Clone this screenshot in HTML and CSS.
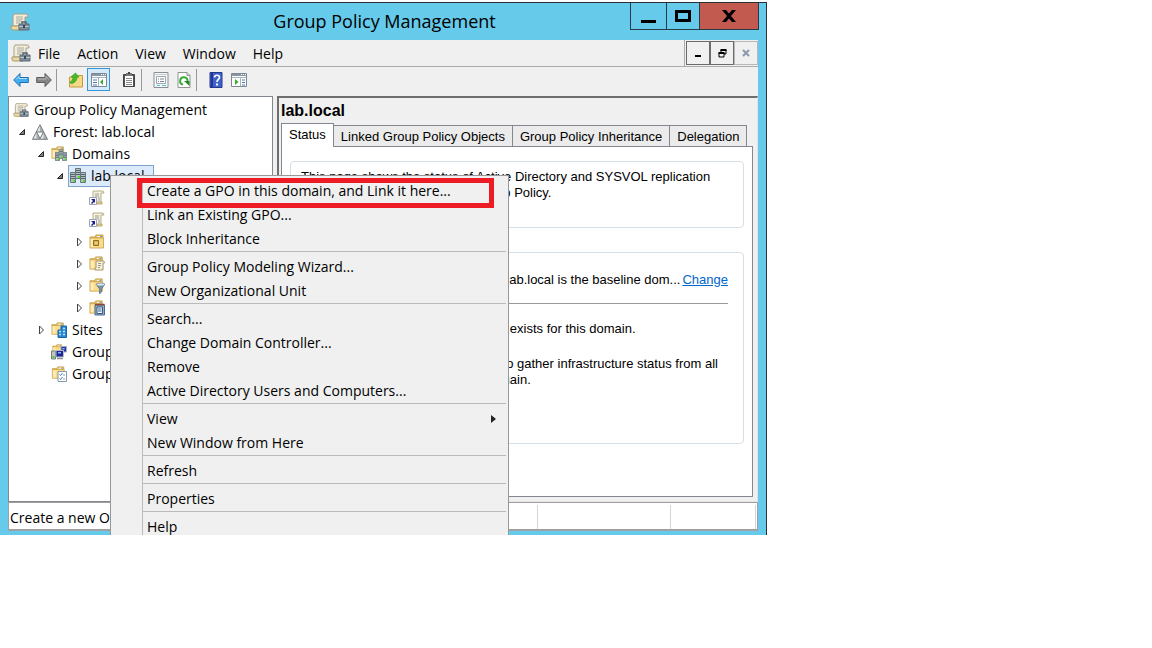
FILE: index.html
```html
<!DOCTYPE html>
<html lang="en">
<head>
<meta charset="utf-8">
<title>Group Policy Management</title>
<link rel="stylesheet" href="styles.css">
</head>
<body>
<svg class="sprite" aria-hidden="true">
  <symbol id="i-gpm" viewBox="0 0 20 20">
    <path d="M4 2h12a2 2 0 0 1 2 2v1h-3v9H3V4z" fill="#f3eddb" stroke="#a89f86"/>
    <path d="M6 5h7M6 7h7M6 9h6M6 11h4" stroke="#aaa9a0"/>
    <path d="M1 14h11v4H3a2 2 0 0 1-2-2z" fill="#ead9a6" stroke="#aa9a6c"/>
    <path d="M12 12v-2h4v2" fill="none" stroke="#555f69" stroke-width="1.4"/>
    <path d="M9 12h10v6H9z" fill="#7d8d9b" stroke="#5c6a76"/>
    <path d="M9 14.500h10" stroke="#b9c5ce"/><path d="M13 13h2v3h-2z" fill="#3d4750"/>
  </symbol>
  <symbol id="i-forest" viewBox="0 0 16 16">
    <path d="M8 .7 15.500 15.300H.5z" fill="#a9afb1" stroke="#777d80"/>
    <path d="M8 2v5.500H5zM4.500 9v5.500H1.600zM11.500 9v5.500H8.500z" fill="#e4e8e9"/>
    <path d="M4.500 8h7L8 14.500z" fill="#fff" stroke="#777d80"/>
  </symbol>
  <symbol id="i-folder" viewBox="0 0 16 16">
    <path d="M1 3h5l1-2h7v3H1z" fill="#e9c56a" stroke="#c99e49"/>
    <path d="M8.500 2.500h4" stroke="#fff"/><path d="M11 2.500h2" stroke="#4c9ad4"/>
    <path d="M1 4h13.500v10H1z" fill="#f9dc8c" stroke="#d3ac58"/>
    <path d="M2 5h3v8H2z" fill="#fdecb5"/>
  </symbol>
  <symbol id="i-server" viewBox="0 0 6 11">
    <path d="M.5.5h5v10h-5z" fill="#b4c0c3" stroke="#66777b"/>
    <path d="M1 2.500h4M1 4.500h4M1 6.500h4" stroke="#52656a"/>
    <path d="M3 8h2v2H3z" fill="#4fe01e"/>
  </symbol>
  <symbol id="i-domains" viewBox="0 0 16 16">
    <use href="#i-folder" width="14" height="14"/>
    <use href="#i-server" x="4" y="6" width="5" height="9"/>
    <use href="#i-server" x="11" y="6" width="5" height="9"/>
    <use href="#i-server" x="7.500" y="3" width="5" height="10"/>
  </symbol>
  <symbol id="i-domain" viewBox="0 0 16 16">
    <use href="#i-server" x="5" y="0" width="6" height="11"/>
    <use href="#i-server" x="0" y="4" width="6" height="11"/>
    <use href="#i-server" x="10" y="4" width="6" height="11"/>
  </symbol>
  <symbol id="i-link" viewBox="0 0 16 16">
    <path d="M4 1h9a2 2 0 0 1 2 2h-3v10H4z" fill="#f6f1df" stroke="#b9ac84"/>
    <path d="M6 4h4M6 6h4M9 8h2M9 10h2" stroke="#999"/>
    <path d="M8 12h5v2H8z" fill="#e5d498" stroke="#b9a870"/>
    <path d="M.5 7.500h7v7h-7z" fill="#fff" stroke="#9aa2b4"/>
    <path d="M2 9h4v4L5 12l-2 2-1-1 2-2z" fill="#1c1c9c"/>
  </symbol>
  <symbol id="i-ou" viewBox="0 0 16 16">
    <use href="#i-folder" width="16" height="16"/>
    <path d="M4.500 6.500h5v5h-5z" fill="#d8b34d" stroke="#8e7220"/><path d="M6 8h3v2H6z" fill="#e9d17a"/>
  </symbol>
  <symbol id="i-gpos" viewBox="0 0 16 16">
    <use href="#i-folder" width="15" height="15"/>
    <path d="M7 5h7a1.500 1.500 0 0 1 1.500 2H14v7H6v-2h1z" fill="#f7f0da" stroke="#a69669"/>
    <path d="M9 7.500h3M9 9.500h3M9 11.500h2" stroke="#9a9a9a"/>
  </symbol>
  <symbol id="i-wmi" viewBox="0 0 16 16">
    <use href="#i-folder" width="15" height="15"/>
    <path d="M7 6h9l-3.500 5v3L10.500 16v-5z" fill="#7892aa" stroke="#526b83" stroke-width=".7"/>
    <ellipse cx="11.500" cy="6.500" rx="4" ry="1.500" fill="#e1eaf1" stroke="#657c92" stroke-width=".6"/>
  </symbol>
  <symbol id="i-starter" viewBox="0 0 16 16">
    <use href="#i-folder" width="15" height="15"/>
    <path d="M6 5h9.500v10H6z" fill="#92b0cf" stroke="#4d6887"/>
    <path d="M6 4.500h9.500" stroke="#90452f" stroke-width="1.500"/>
    <path d="M8 7h5.500v6.500H8z" fill="#fff" stroke="#315985"/><path d="M9 9h3.500M9 11h3.500" stroke="#315985"/>
  </symbol>
  <symbol id="i-sites" viewBox="0 0 16 16">
    <use href="#i-folder" width="14" height="14"/>
    <path d="M10 4h5.500v11.500H7V8h3z" fill="#2887d0" stroke="#1a65a8"/>
    <path d="M8 9.500h2M8 12.500h2M12 6.500h2M12 9.500h2M12 12.500h2" stroke="#b9e6ff" stroke-width="1.500"/>
  </symbol>
  <symbol id="i-model" viewBox="0 0 16 16">
    <use href="#i-folder" x="1" width="11" height="11"/>
    <path d="M.5 7h4v8h-4z" fill="#c0c5c7" stroke="#777e83"/><path d="M1.500 12h2v2h-2z" fill="#4bd127"/>
    <path d="M10 2.500h5.500V8H10z" fill="#2834aa" stroke="#a8afb8"/>
    <path d="M5 6.500h7.500V13H5z" fill="#1b2795" stroke="#b6bcc4"/>
    <path d="M7 8h3v1.500H7zM11.500 4h2v1.500h-2z" fill="#8bb5ff"/><path d="M6 14.500h6" stroke="#8c939a" stroke-width="1.500"/>
  </symbol>
  <symbol id="i-results" viewBox="0 0 16 16">
    <use href="#i-folder" width="15" height="14"/>
    <path d="M7 5.500h8.500v10H7z" fill="#fff" stroke="#8798a6"/>
    <path d="m8.500 8.500 1 1L11.500 7M8.500 12.500l1 1 2-2.500" fill="none" stroke="#2980cc"/><path d="M12 9h2M12 13h2" stroke="#999"/>
  </symbol>
  <symbol id="i-back" viewBox="0 0 16 16">
    <path d="M.7 8 7 1.500v4h8.300v5H7v4z" fill="#42adf0" stroke="#206fb2"/><path d="M3 7.500 6 4.500v2h8" fill="none" stroke="#a7defd"/>
  </symbol>
  <symbol id="i-fwd" viewBox="0 0 16 16">
    <path d="M15.300 8 9 1.500v4H.7v5H9v4z" fill="#858585" stroke="#5c5c5c"/><path d="M2 7h8V4.500l3 3" fill="none" stroke="#b9b9b9"/>
  </symbol>
  <symbol id="i-up" viewBox="0 0 16 16">
    <path d="M1.500 5h8l1-1.500h4V15h-13z" fill="#f6d987" stroke="#c79a3e"/>
    <path d="M2 10c2-1 3-2.500 3-5H3l4.500-4L11 5H9c0 4-3 6.500-6 6.500z" fill="#48bd28" stroke="#2c8d18" stroke-width=".6"/>
  </symbol>
  <symbol id="i-pane" viewBox="0 0 16 16">
    <path d="M.5 1.500h15v13H.5z" fill="#fff" stroke="#7d8791"/><path d="M1 3h14" stroke="#8797a5" stroke-width="2"/>
    <path d="M10 2.500h1M12 2.500h1M14 2.500h1" stroke="#fff"/><path d="M1 5.500h14M7.500 6v8" stroke="#aab4bc"/>
    <path d="M2 8h4M2 10.500h4M2 13h4" stroke="#477bb2"/><path d="M12 7v6L9 10z" fill="#39ad2d"/>
  </symbol>
  <symbol id="i-action" viewBox="0 0 16 16">
    <path d="M.5 1.500h15v13H.5z" fill="#fff" stroke="#7d8791"/><path d="M1 3h14" stroke="#8797a5" stroke-width="2"/>
    <path d="M10 2.500h1M12 2.500h1M14 2.500h1" stroke="#fff"/><path d="M1 5.500h14M9.500 6v8" stroke="#aab4bc"/>
    <path d="M11 8h3M11 10.500h3M11 13h3" stroke="#477bb2"/><path d="M4 7v6l3.500-3z" fill="#39ad2d"/>
  </symbol>
  <symbol id="i-clip" viewBox="0 0 16 16">
    <path d="M2.500 2.500h11v12h-11z" fill="#555" stroke="#444"/><path d="M4 4h8v10H4z" fill="#fff"/>
    <path d="M5 6.500h6M5 8.500h6M5 10.500h6M5 12.500h6" stroke="#8b8b8b"/><path d="M5 1h6v3H5z" fill="#777"/><path d="M7 0h2v2H7z" fill="#444"/>
  </symbol>
  <symbol id="i-props" viewBox="0 0 16 16">
    <path d="M1 .5h14v15H1z" fill="#f7f7f7" stroke="#8a8f94"/><path d="M2 2.500h12" stroke="#c5cbd0"/>
    <path d="M3.500 4.500h9v7h-9z" fill="#fff" stroke="#9ba7b0"/><path d="M5 7h1M5 9.500h1M7 7h4M7 9.500h4" stroke="#778899"/><path d="M4 13.500h3M9 13.500h4" stroke="#5bc2e5"/>
  </symbol>
  <symbol id="i-refresh" viewBox="0 0 16 16">
    <path d="M2 .5h9l3 3v12H2z" fill="#fff" stroke="#929292"/><path d="M11 .5v3h3" fill="#ddd" stroke="#929292"/>
    <path d="M7 12.500A3.700 3.700 0 1 1 11.500 9" fill="none" stroke="#36ad32" stroke-width="2"/><path d="M8 9h5.500v5z" fill="#248c22"/>
  </symbol>
  <symbol id="i-help" viewBox="0 0 16 16">
    <path d="M2 .5h12v15H2z" fill="#3e62cd" stroke="#23388e"/><path d="M3 1h2v14H3z" fill="#23388e"/>
    <path d="M6.500 5.500c0-3 5-3 5 0 0 2-2.500 2-2.500 4.500" fill="none" stroke="#fff" stroke-width="1.700"/><path d="M8 11.500h2v2H8z" fill="#fff"/>
  </symbol>
  <symbol id="i-open" viewBox="0 0 8 8"><path d="M6.500 1.500v5h-5z" fill="#808080" stroke="#262626"/></symbol>
  <symbol id="i-closed" viewBox="0 0 8 10"><path d="M2.500 1v8l4-4z" fill="#fff" stroke="#444"/></symbol>
</svg>

<div class="desktop">
<main class="window">
  <header class="titlebar">
    <svg class="icon-lg"><use href="#i-gpm"/></svg>
    <h1 class="title">Group Policy Management</h1>
    <div class="captions">
      <button class="caption cap-min" aria-label="Minimize"><svg width="16" height="14"><path d="M0 11h15v3H0z"/></svg></button>
      <button class="caption cap-max" aria-label="Maximize"><svg width="16" height="14"><path d="M1.500 2.500h13v9h-13z" fill="none" stroke="#000" stroke-width="3"/></svg></button>
      <button class="caption cap-close" aria-label="Close"><svg width="14" height="12"><path d="M0 0h4l3 3.500L10 0h4L9 6l5 6h-4L7 8.500 4 12H0l5-6z"/></svg></button>
    </div>
  </header>

  <div class="client">
    <div class="menubar">
      <svg class="icon-lg"><use href="#i-gpm"/></svg>
      <nav class="menus">
        <button class="menu">File</button><button class="menu">Action</button><button class="menu">View</button><button class="menu">Window</button><button class="menu">Help</button>
      </nav>
      <div class="child-buttons">
        <button class="child" aria-label="Minimize child"><svg width="8" height="8"><path d="M1 6h6v2H1z"/></svg></button>
        <button class="child" aria-label="Restore child"><svg width="9" height="9"><path d="M3 3V1h5v4H6M1 4h5v4H1z" fill="none" stroke="#000"/><path d="M2.500 1h6M.5 4h6" stroke="#000" stroke-width="2"/></svg></button>
        <button class="child child-off" aria-label="Close child" disabled><svg width="8" height="8"><path d="m1 1 6 6M7 1 1 7" stroke="#8d99ab" stroke-width="2"/></svg></button>
      </div>
    </div>

    <div class="toolbar">
      <button class="tool" aria-label="Back"><svg class="icon"><use href="#i-back"/></svg></button>
      <button class="tool" aria-label="Forward"><svg class="icon"><use href="#i-fwd"/></svg></button>
      <span class="tool-sep"></span>
      <button class="tool" aria-label="Up one level"><svg class="icon"><use href="#i-up"/></svg></button>
      <button class="tool tool-on" aria-label="Show console tree"><svg class="icon"><use href="#i-pane"/></svg></button>
      <button class="tool tool-apart" aria-label="Paste"><svg class="icon"><use href="#i-clip"/></svg></button>
      <span class="tool-sep"></span>
      <button class="tool" aria-label="Properties"><svg class="icon"><use href="#i-props"/></svg></button>
      <button class="tool" aria-label="Refresh"><svg class="icon"><use href="#i-refresh"/></svg></button>
      <span class="tool-sep"></span>
      <button class="tool" aria-label="Help"><svg class="icon"><use href="#i-help"/></svg></button>
      <button class="tool" aria-label="Show action pane"><svg class="icon"><use href="#i-action"/></svg></button>
    </div>

    <div class="panes">
      <div class="tree-pane">
        <div class="row"><svg class="icon"><use href="#i-gpm"/></svg><span class="label">Group Policy Management</span></div>
        <ul class="tree">
          <li>
            <div class="row"><button class="twisty" aria-label="Collapse"><svg class="tw"><use href="#i-open"/></svg></button><svg class="icon"><use href="#i-forest"/></svg><span class="label">Forest: lab.local</span></div>
            <ul class="branch">
              <li>
                <div class="row"><button class="twisty" aria-label="Collapse"><svg class="tw"><use href="#i-open"/></svg></button><svg class="icon"><use href="#i-domains"/></svg><span class="label">Domains</span></div>
                <ul class="branch">
                  <li>
                    <div class="row"><button class="twisty" aria-label="Collapse"><svg class="tw"><use href="#i-open"/></svg></button><span class="selected"><svg class="icon"><use href="#i-domain"/></svg><span class="label">lab.local</span></span></div>
                    <ul class="branch">
                      <li class="row"><span class="twisty"></span><svg class="icon"><use href="#i-link"/></svg></li>
                      <li class="row"><span class="twisty"></span><svg class="icon"><use href="#i-link"/></svg></li>
                      <li class="row"><button class="twisty" aria-label="Expand"><svg class="tw"><use href="#i-closed"/></svg></button><svg class="icon"><use href="#i-ou"/></svg></li>
                      <li class="row"><button class="twisty" aria-label="Expand"><svg class="tw"><use href="#i-closed"/></svg></button><svg class="icon"><use href="#i-gpos"/></svg></li>
                      <li class="row"><button class="twisty" aria-label="Expand"><svg class="tw"><use href="#i-closed"/></svg></button><svg class="icon"><use href="#i-wmi"/></svg></li>
                      <li class="row"><button class="twisty" aria-label="Expand"><svg class="tw"><use href="#i-closed"/></svg></button><svg class="icon"><use href="#i-starter"/></svg></li>
                    </ul>
                  </li>
                </ul>
              </li>
              <li class="row"><button class="twisty" aria-label="Expand"><svg class="tw"><use href="#i-closed"/></svg></button><svg class="icon"><use href="#i-sites"/></svg><span class="label">Sites</span></li>
              <li class="row"><span class="twisty"></span><svg class="icon"><use href="#i-model"/></svg><span class="label">Group</span></li>
              <li class="row"><span class="twisty"></span><svg class="icon"><use href="#i-results"/></svg><span class="label">Group</span></li>
            </ul>
          </li>
        </ul>
      </div>

      <section class="detail">
        <h2 class="heading">lab.local</h2>
        <div class="tabs" role="tablist">
          <button class="tab tab-on" role="tab" aria-selected="true">Status</button>
          <button class="tab" role="tab">Linked Group Policy Objects</button>
          <button class="tab" role="tab">Group Policy Inheritance</button>
          <button class="tab" role="tab">Delegation</button>
        </div>
        <div class="page">
          <div class="box">
            <p class="text">This page shows the status of Active Directory and SYSVOL replication<br>for this domain as it relates to Group Policy.</p>
          </div>
          <div class="box box-details">
            <p class="text baseline"><span>DC.lab.local is the baseline dom...</span><a class="link" href="#change">Change</a></p>
            <p class="text">No Infrastructure Status information exists for this domain.</p>
            <p class="text">Click the Detect Now button below to gather infrastructure status from all<br>of the domain controllers in this domain.</p>
          </div>
        </div>
      </section>
    </div>

    <footer class="statusbar">
      <span class="status">Create a new Object</span><span class="status"></span><span class="status"></span>
    </footer>
  </div>

  <div class="context" role="menu">
    <div class="group"><button class="item item-first" role="menuitem">Create a GPO in this domain, and Link it here...</button><button class="item" role="menuitem">Link an Existing GPO...</button><button class="item" role="menuitem">Block Inheritance</button></div>
    <div class="group"><button class="item" role="menuitem">Group Policy Modeling Wizard...</button><button class="item" role="menuitem">New Organizational Unit</button></div>
    <div class="group"><button class="item" role="menuitem">Search...</button><button class="item" role="menuitem">Change Domain Controller...</button><button class="item" role="menuitem">Remove</button><button class="item" role="menuitem">Active Directory Users and Computers...</button></div>
    <div class="group"><button class="item" role="menuitem">View<svg class="arrow" width="5" height="8"><path d="M0 0v8l5-4z" fill="#222"/></svg></button><button class="item" role="menuitem">New Window from Here</button></div>
    <div class="group"><button class="item" role="menuitem">Refresh</button></div>
    <div class="group"><button class="item" role="menuitem">Properties</button></div>
    <div class="group"><button class="item" role="menuitem">Help</button></div>
  </div>
</main>
</div>
</body>
</html>
```
FILE: styles.css
```css
* { box-sizing: border-box; margin: 0; padding: 0; }
body { background: #fff; color: #000; font: 14px/22px "Open Sans", "Noto Sans", sans-serif; }
button { font: inherit; color: inherit; background: none; border: 0; text-align: left; white-space: nowrap; }
ul { list-style: none; }
svg { display: block; flex: none; }
.sprite { position: absolute; width: 0; height: 0; }
.icon { width: 16px; height: 16px; }
.icon-lg { width: 20px; height: 20px; }

.desktop { display: grid; grid-template: 533fr 113fr / 767fr 385fr; height: 100vh; padding-top: 2px; }
.window { position: relative; display: flex; flex-direction: column; min-width: 0; min-height: 0; overflow: hidden; background: #66caea; border-top: 1px solid #2a3136; border-right: 1px solid #2a3136; }

.titlebar { display: grid; grid-template-columns: 1fr auto 1fr; align-items: center; height: 37px; flex: none; padding: 0 7px 0 10px; }
.title { padding-bottom: 2px; font-size: 18px; font-weight: 400; line-height: 34px; white-space: nowrap; }
.captions { display: flex; justify-self: end; align-self: start; height: 27px; border: 1px solid #263b45; border-top: 0; }
.caption { display: flex; align-items: center; justify-content: center; padding-bottom: 1px; }
.cap-min { width: 36px; border-right: 1px solid #263b45; }
.cap-max { width: 33px; border-right: 1px solid #263b45; }
.cap-close { width: 58px; background: #c35a50; }

.client { display: flex; flex-direction: column; flex: 1; min-height: 0; margin: 0 8px 4px; background: #f0f0f0; }
.menubar { display: flex; align-items: center; height: 27px; flex: none; padding-left: 3px; border-bottom: 1px solid #aaa; }
.menus { display: flex; gap: 17px; flex: 1; padding: 2px 0 0 7px; }
.child-buttons { display: flex; align-self: stretch; align-items: flex-start; padding: 1px 0 0 1px; border-left: 1px solid #aaa; }
.child { display: flex; align-items: center; justify-content: center; width: 24px; height: 24px; border: 1px solid #6c6c6c; }
.child-off { border-color: #b4b8bb; }

.toolbar { display: flex; align-items: center; height: 29px; flex: none; padding: 0 1px 4px; }
.tool { display: flex; align-items: center; justify-content: center; width: 23px; height: 23px; }
.tool-on { background: #d5eafa; border: 1px solid #3398db; }
.tool-apart { margin-left: 7px; }
.tool-sep { width: 1px; height: 22px; margin: 0 7px 0 1px; background: #999; }

.panes { display: grid; grid-template-columns: 265fr 481fr; column-gap: 4px; flex: 1; min-height: 0; }
.tree-pane { min-width: 0; overflow: hidden; padding: 2px 4px; background: #fff; border: 1px solid #828790; }
.branch { padding-left: 19px; }
.row { display: flex; align-items: center; height: 22px; white-space: nowrap; }
.label { padding-left: 5px; }
.twisty { flex: none; width: 19px; padding-left: 5px; }
.tw { width: 8px; height: 10px; }
.selected { display: flex; align-items: center; height: 22px; margin-left: -2px; padding: 0 8px 0 1px; background: #dcebfc; border: 1px solid #7da2ce; }

.detail { display: flex; flex-direction: column; min-width: 0; padding: 4px 4px 4px 2px; border: 1px solid #e3e3e3; border-top: 2px solid #6e6e6e; border-left: 2px solid #6e6e6e; font: 13px/16px "Liberation Sans", Arial, sans-serif; }
.heading { font-size: 16px; line-height: 18px; }
.tabs { display: flex; align-items: flex-end; height: 27px; flex: none; }
.tab { height: 22px; padding: 1px 7px 0; background: #ebebeb; border: 1px solid #828790; border-left: 0; }
.tab-on { position: relative; z-index: 1; height: 24px; padding: 0 7px 2px; background: #fff; border-left: 1px solid #828790; border-bottom: 0; }
.page { display: flex; flex-direction: column; gap: 24px; flex: 1; margin-top: -1px; padding: 14px 8px; background: #fff; border: 1px solid #828790; }
.box { min-height: 67px; padding: 7px 10px; border: 1px solid #d5dfe5; border-radius: 4px; }
.box-details { display: flex; flex-direction: column; gap: 17px; min-height: 192px; padding: 19px 15px 18px 10px; }
.text { white-space: nowrap; }
.text + .text + .text { padding-top: 2px; }
.baseline { display: flex; justify-content: flex-end; gap: 2px; padding-bottom: 15px; border-bottom: 1px solid #999; }
.link { color: #0066cc; }

.statusbar { display: grid; grid-template-columns: 530fr 133fr 85fr; height: 29px; flex: none; padding: 2px 1px 0 0; background: #fff; border: 1px solid #a0a0a0; border-bottom-width: 2px; }
.status { min-width: 0; overflow: hidden; white-space: nowrap; padding-left: 1px; line-height: 26px; border-right: 1px solid #d4d4d4; }

.context { position: absolute; z-index: 2; left: 110px; top: 172px; width: 399px; padding: 3px 2px 3px 31px; background: #f0f0f0; border: 1px solid #979797; }
.group { border-left: 1px solid #bbb; }
.group + .group { padding-top: 3px; border-top: 1px solid #bbb; }
.item { display: flex; align-items: center; justify-content: space-between; width: 100%; height: 24px; padding: 0 10px 0 4px; }
.item-first { position: relative; }
.item-first::after { content: ""; position: absolute; inset: -1px 12px -5px -6px; border: 5px solid #ed1c24; }
```
